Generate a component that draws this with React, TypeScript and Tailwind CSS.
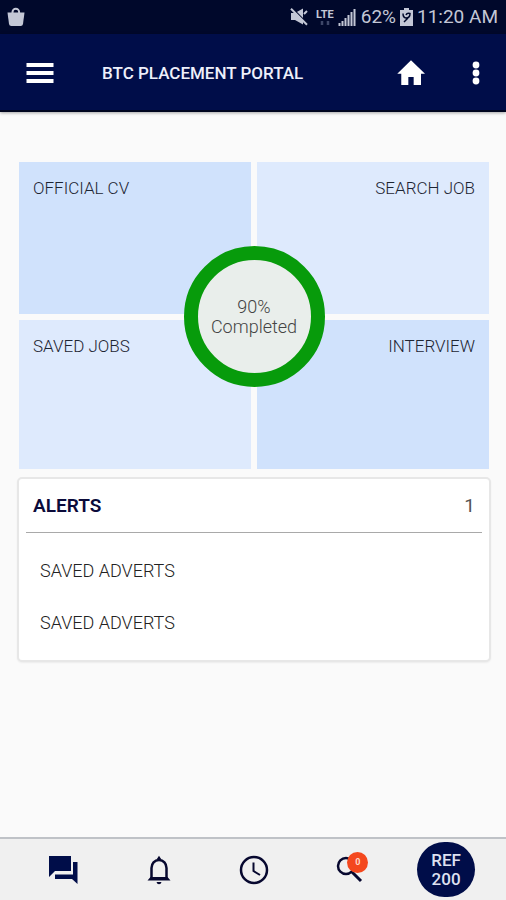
import React from "react";

function StatusBar() {
  return (
    <div className="flex h-[34px] items-center justify-between bg-[#00082b] pr-2 pl-[7px] text-[#c3c7d6]">
      <svg width="18" height="20" viewBox="0 0 18 20" aria-hidden="true">
        <path d="M5.5 7V5a3.3 3.3 0 0 1 6.6 0v2" fill="none" stroke="currentColor" strokeWidth="2" />
        <path d="M.5 5.5h17L16 17q-.3 2-2.300 2H4.300Q2.300 19 2 17z" fill="currentColor" />
      </svg>
      <div className="flex items-center">
        <svg className="mr-2" width="18" height="18" viewBox="0 0 18 18" aria-hidden="true">
          <path d="M1 5h4l8-4.500v16L5 12H1z" fill="currentColor" />
          <path d="M2.500 .5l15 15" stroke="#00082b" strokeWidth="1.500" />
          <path d="M1 .8l16 16M17 3l-3 3" stroke="currentColor" strokeWidth="2" />
        </svg>
        <div className="mr-1 flex flex-col items-center">
          <span className="text-[11px] leading-[11px] font-bold">LTE</span>
          <svg width="10" height="6" viewBox="0 0 10 6" aria-hidden="true">
            <path d="M2 1v4M8 1v4" stroke="#3d4668" strokeWidth="2.500" />
          </svg>
        </div>
        <svg className="mr-[5px]" width="18" height="18" viewBox="0 0 18 18" aria-hidden="true">
          <path d="M1.500 18v-3M4.500 18v-5M7.500 18v-8M10.500 18V7M13.500 18V4M16.500 18V1" stroke="currentColor" strokeWidth="2" />
        </svg>
        <span className="text-[19px] leading-6">62%</span>
        <svg className="mx-1" width="13" height="20" viewBox="0 0 13 20" aria-hidden="true">
          <path d="M0 3h4V1h5v2h4v16H0z" fill="currentColor" />
          <path d="M3 6.500q0 4 3 4.500 4 0 4-4.500-3-1-4 1.500M8 11l-4 4" fill="none" stroke="#00082b" strokeWidth="1.500" />
        </svg>
        <span className="text-[19px] leading-6">11:20 AM</span>
      </div>
    </div>
  );
}

function Header() {
  return (
    <header className="flex h-[78px] items-center border-b-2 border-[#00051f] bg-[#000d49] pt-[2px] pr-3 pl-6 text-white shadow-[0_1px_3px_rgba(0,0,0,0.35)]">
      <button type="button" aria-label="Menu" className="flex size-8 items-center justify-center">
        <svg width="28" height="22" viewBox="0 0 28 22" aria-hidden="true">
          <path d="M.5 3h27M.5 11h27M.5 19h27" stroke="currentColor" strokeWidth="4" />
        </svg>
      </button>
      <h1 className="ml-[46px] flex-1 text-[17px] leading-6 font-medium text-[#eef0fb]">BTC PLACEMENT PORTAL</h1>
      <button type="button" aria-label="Home" className="mr-[31px]">
        <svg width="32" height="32" viewBox="0 0 24 24" aria-hidden="true">
          <path d="M10 21v-6h4v6h5.500v-8.500h3L12 2.500 1.700 12.500h3V21z" fill="currentColor" />
        </svg>
      </button>
      <button type="button" aria-label="More options" className="flex size-9 items-center justify-center">
        <svg width="8" height="24" viewBox="0 0 8 24" aria-hidden="true">
          <circle cx="4" cy="4" r="3.400" fill="currentColor" />
          <circle cx="4" cy="12" r="3.400" fill="currentColor" />
          <circle cx="4" cy="20" r="3.400" fill="currentColor" />
        </svg>
      </button>
    </header>
  );
}

const tile = "flex items-start px-[14px] pt-[14px] text-[17px] leading-6 font-light text-[#1d2533]";

function Dashboard() {
  return (
    <nav aria-label="Dashboard" className="relative mx-[2px]">
      <div className="grid grid-cols-2 grid-rows-[152px_149px] gap-[6px]">
        <button type="button" className={`${tile} bg-[#d0e2fc]`}>OFFICIAL CV</button>
        <button type="button" className={`${tile} justify-end bg-[#deeafd]`}>SEARCH JOB</button>
        <button type="button" className={`${tile} bg-[#deeafd]`}>SAVED JOBS</button>
        <button type="button" className={`${tile} justify-end bg-[#d0e2fc]`}>INTERVIEW</button>
      </div>
      <div className="absolute inset-x-0 top-[84px] mx-auto flex size-[141px] flex-col items-center justify-center rounded-full border-[14px] border-[#079b0b] bg-[#e9eeeb] text-[18px] leading-5 font-light text-[#444]">
        <span>90%</span>
        <span>Completed</span>
      </div>
    </nav>
  );
}

function Alerts() {
  return (
    <section className="mt-2 rounded-[5px] border-2 border-[#e7e7e7] bg-white px-[7px] pb-3 shadow-[0_1px_2px_rgba(0,0,0,0.06)]">
      <div className="flex h-[54px] items-center justify-between border-b border-[#a9a9a9] px-[7px] text-[19px] leading-6">
        <h2 className="font-semibold text-[#0b0b3a]">ALERTS</h2>
        <span className="text-[#555]">1</span>
      </div>
      <ul className="px-[14px] pt-[11px] text-[18px] font-light text-[#222]">
        <li className="flex h-[52px] items-center">SAVED ADVERTS</li>
        <li className="flex h-[52px] items-center">SAVED ADVERTS</li>
      </ul>
    </section>
  );
}

function Footer() {
  return (
    <footer className="mt-auto grid h-[63px] grid-cols-5 items-center border-t-2 border-[#bfc2c7] bg-[#f0f0f0] pr-3 pl-[15px] text-[#07082f]">
      <button type="button" aria-label="Messages" className="flex justify-center">
        <svg width="30" height="30" viewBox="0 0 30 30" aria-hidden="true">
          <path d="M1 1h22v15H7l-6 6z" fill="#000d49" />
          <path d="M25 7h4.500v22l-5.500-5H7v-4.500h18z" fill="#000d49" />
        </svg>
      </button>
      <button type="button" aria-label="Notifications" className="flex justify-center">
        <svg width="30" height="30" viewBox="0 0 30 30" aria-hidden="true">
          <path d="M7.500 24V13c0-4.500 3-8 7.500-8s7.500 3.500 7.500 8v11" fill="none" stroke="currentColor" strokeWidth="2.500" />
          <path d="M12.500 4.500L15 .8l2.500 3.700zM3.500 25.500l3-3.500h17l3 3.500zM12.500 27h5q-.5 2.300-2.500 2.300T12.500 27z" fill="currentColor" />
        </svg>
      </button>
      <button type="button" aria-label="History" className="flex justify-center">
        <svg width="30" height="30" viewBox="0 0 30 30" fill="none" stroke="currentColor" strokeWidth="2.500" aria-hidden="true">
          <circle cx="15" cy="15" r="13" />
          <path d="M14.500 7.500V16l6.500 4" strokeWidth="2" />
        </svg>
      </button>
      <button type="button" aria-label="Search, 0 results" className="flex justify-center">
        <span className="relative">
          <svg width="30" height="30" viewBox="0 0 30 30" fill="none" stroke="currentColor" aria-hidden="true">
            <circle cx="11" cy="11" r="8" strokeWidth="2.500" />
            <path d="M16.500 16.500l9.500 9.500" strokeWidth="3" />
          </svg>
          <span className="absolute -top-[3px] left-3 flex size-[21px] items-center justify-center rounded-full bg-[#f4481e] text-[9px] leading-none font-bold text-[#ffd9cc]">0</span>
        </span>
      </button>
      <button type="button" className="mx-auto flex h-[55px] w-[58px] flex-col items-center justify-center rounded-full bg-[#000d49] text-[17px] leading-[19px] font-medium text-[#dde0f0]">
        <span>REF</span>
        <span>200</span>
      </button>
    </footer>
  );
}

export default function App() {
  return (
    <div className="flex min-h-screen flex-col bg-[#fafafa] font-['Roboto','Liberation_Sans',sans-serif]">
      <StatusBar />
      <Header />
      <main className="pt-[50px] pr-[15px] pb-6 pl-[17px]">
        <Dashboard />
        <Alerts />
      </main>
      <Footer />
    </div>
  );
}
